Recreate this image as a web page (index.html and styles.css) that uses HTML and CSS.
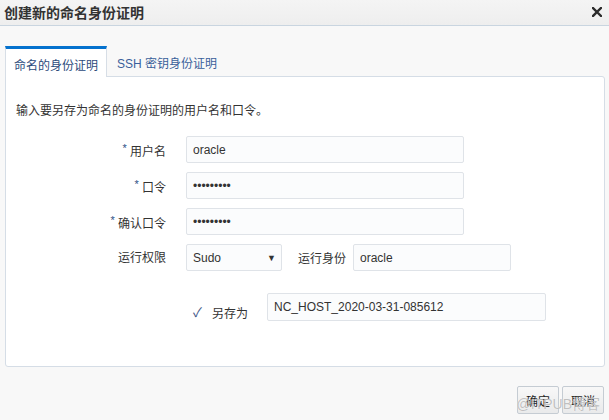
FILE: index.html
```html
<!DOCTYPE html>
<html lang="zh-CN">
<head>
<meta charset="utf-8">
<title>创建新的命名身份证明</title>
<link rel="stylesheet" href="styles.css">
</head>
<body>
<div class="dialog">
  <div class="titlebar">
    <span class="title">创建新的命名身份证明</span>
    <svg class="close" width="10" height="10" viewBox="0 0 10 10"><path d="M1 1 L9 9 M9 1 L1 9" stroke="#2b2b2b" stroke-width="2.4" stroke-linecap="square"/></svg>
  </div>
  <div class="content">
    <div class="tabs">
      <div class="tab active">命名的身份证明</div>
      <div class="tab">SSH 密钥身份证明</div>
    </div>
    <div class="panel">
      <p class="desc">输入要另存为命名的身份证明的用户名和口令。</p>
      <div class="form">
        <label class="lbl"><span class="req">*</span> 用户名</label>
        <input class="field wide" type="text" value="oracle">
        <label class="lbl"><span class="req">*</span> 口令</label>
        <input class="field wide" type="password" value="123456789">
        <label class="lbl"><span class="req">*</span> 确认口令</label>
        <input class="field wide" type="password" value="123456789">
        <label class="lbl">运行权限</label>
        <div class="runrow">
          <div class="select"><span>Sudo</span><span class="arrow">▼</span></div>
          <label class="lbl2">运行身份</label>
          <input class="field runas" type="text" value="oracle">
        </div>
        <div class="saverow">
          <span class="check">✓</span>
          <span class="savelbl">另存为</span>
          <input class="field savename" type="text" value="NC_HOST_2020-03-31-085612">
        </div>
      </div>
    </div>
    <div class="footer">
      <button class="btn">确定</button>
      <button class="btn">取消</button>
    </div>
  </div>
  <div class="watermark">@ITPUB博客</div>
</div>
</body>
</html>
```
FILE: styles.css
```css
html, body {
  margin: 0;
  padding: 0;
}
body {
  width: 609px;
  height: 420px;
  overflow: hidden;
  background: #f8f8f8;
  font-family: "Liberation Sans", "Noto Sans CJK SC", sans-serif;
  color: #333;
}
.dialog {
  position: relative;
  width: 609px;
  height: 420px;
  display: flex;
  flex-direction: column;
}
.titlebar {
  height: 25px;
  border-bottom: 1px solid #c9d5e0;
  background: linear-gradient(#f4f4f4, #eeeeee);
  display: flex;
  align-items: center;
  justify-content: space-between;
  padding: 0 7px 0 4px;
}
.title {
  font-size: 14px;
  font-weight: bold;
  color: #333;
  line-height: 16px;
}
.close {
  display: block;
  margin-top: -2px;
}
.content {
  padding: 20px 5px 0 5px;
  display: flex;
  flex-direction: column;
}
.tabs {
  display: flex;
  height: 31px;
  margin-bottom: -1px;
  position: relative;
  z-index: 1;
}
.tab {
  font-size: 12px;
  line-height: 16px;
  padding: 10px 10px 0 10px;
  color: #3a5f9b;
  white-space: nowrap;
}
.tab.active {
  padding: 9px 8px 0 8px;
  background: #fff;
  border-top: 3px solid #0572ce;
  border-left: 1px solid #d7dee6;
  border-right: 1px solid #d7dee6;
  color: #2c4b7c;
  height: 19px;
}
.panel {
  width: 598px;
  height: 289px;
  background: #fff;
  border: 1px solid #d5dde6;
  border-radius: 0 3px 3px 3px;
}
.desc {
  margin: 26px 0 0 10px;
  font-size: 12px;
  line-height: 16px;
  color: #333;
}
.form {
  margin-top: 17px;
  display: grid;
  grid-template-columns: 160px auto;
  column-gap: 20px;
  row-gap: 9px;
  align-items: center;
}
.lbl {
  font-size: 12px;
  text-align: right;
  color: #333;
  line-height: 16px;
}
.req {
  color: #2d4f86;
  font-size: 11px;
  vertical-align: 4px;
}
.field {
  box-sizing: border-box;
  height: 27px;
  border: 1px solid #dfe3e8;
  border-radius: 2px;
  background: #fbfcfd;
  font-family: "Liberation Sans", "Noto Sans CJK SC", sans-serif;
  font-size: 12px;
  color: #333;
  padding: 0 6px;
  margin: 0;
  outline: none;
}
.field.wide {
  width: 278px;
}
.runrow {
  display: flex;
  align-items: center;
}
.select {
  box-sizing: border-box;
  width: 96px;
  height: 27px;
  border: 1px solid #dfe3e8;
  border-radius: 2px;
  background: #fbfcfd;
  font-size: 12px;
  display: flex;
  align-items: center;
  justify-content: space-between;
  padding: 0 5px 0 6px;
  color: #333;
}
.arrow {
  font-size: 9px;
  color: #333;
}
.lbl2 {
  font-size: 12px;
  margin-left: 16px;
  color: #333;
}
.field.runas {
  width: 158px;
  margin-left: 7px;
}
.saverow {
  grid-column: 2;
  display: flex;
  align-items: center;
  padding-left: 7px;
  margin-top: 13px;
}
.check {
  font-size: 13px;
  color: #3b5686;
  width: 12px;
  margin-top: 8px;
}
.savelbl {
  font-size: 12px;
  margin-left: 7px;
  margin-top: 10px;
  color: #333;
}
.field.savename {
  width: 279px;
  height: 28px;
  margin-left: 19px;
}
.footer {
  display: flex;
  justify-content: flex-end;
  gap: 3px;
  margin-top: 19px;
}
.btn {
  height: 28px;
  padding: 0 8px;
  border: 1px solid #c5ccd3;
  border-radius: 2px;
  background: linear-gradient(#f8f8f8, #e9eaeb);
  font-family: "Liberation Sans", "Noto Sans CJK SC", sans-serif;
  font-size: 12px;
  color: #222;
}
.watermark {
  position: absolute;
  right: 9px;
  bottom: 7px;
  font-size: 14px;
  color: rgba(140, 140, 140, 0.55);
  text-shadow: 0 0 1px #fff;
  pointer-events: none;
}
```
